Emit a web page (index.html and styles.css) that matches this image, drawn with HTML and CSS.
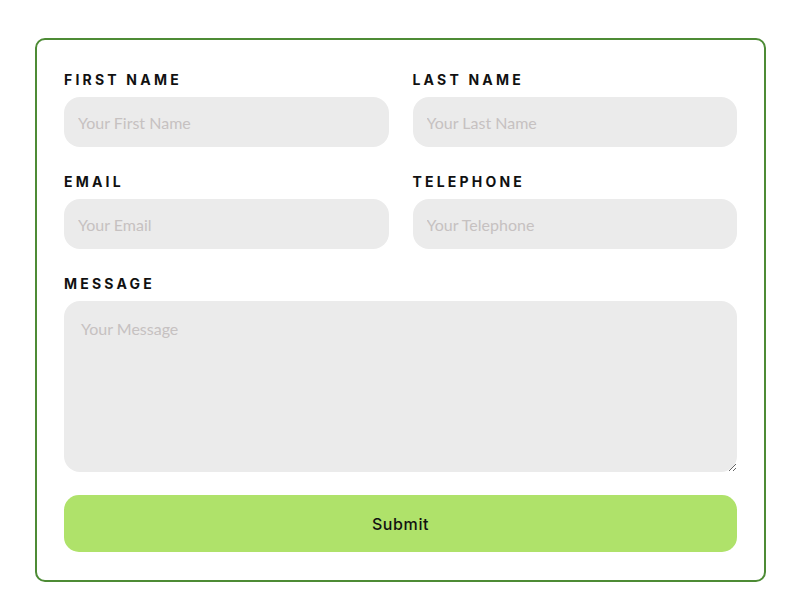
FILE: index.html
```html
<!DOCTYPE html>
<html lang="en">

<head>
    <meta charset="UTF-8">
    <meta name="viewport" content="width=device-width, initial-scale=1.0">
    <title>Contact form</title>
    <link rel="stylesheet" href="styles.css">
</head>

<body>
    <form class="contactForm" action="#" method="POST">
        <div class="field">
            <label for="fname">First Name</label>
            <input type="text" id="fname" name="fname" placeholder="Your First Name">
        </div>
        <div class="field">
            <label for="lname">Last Name</label>
            <input type="text" id="lname" name="lname" placeholder="Your Last Name">
        </div>
        <div class="field">
            <label for="email">Email</label>
            <input type="email" id="email" name="email" placeholder="Your Email">
        </div>
        <div class="field">
            <label for="tel">Telephone</label>
            <input type="tel" id="tel" name="tel" placeholder="Your Telephone">
        </div>
        <div class="field wide">
            <label for="msg">Message</label>
            <textarea id="msg" name="msg" placeholder="Your Message"></textarea>
        </div>
        <button type="submit" class="submitBtn">Submit</button>
    </form>
</body>

</html>
```

FILE: styles.css
```css
body {
    margin: 0;
    background: #fff;
    font-family: "Lato", "Liberation Sans", sans-serif;
}

.contactForm {
    box-sizing: border-box;
    width: 731px;
    height: 544px;
    margin: 38px 0 0 35px;
    padding: 30px 27px 29px 27px;
    border: 2px solid #4d8b35;
    border-radius: 10px;
    display: grid;
    grid-template-columns: 1fr 1fr;
    column-gap: 24px;
    row-gap: 25px;
    align-content: start;
}

.field label {
    display: block;
    font-family: "Inter", sans-serif;
    font-size: 14px;
    font-weight: 700;
    line-height: 20px;
    letter-spacing: 3.2px;
    text-transform: uppercase;
    color: #111;
    margin-bottom: 7px;
}

.field input,
.field textarea {
    box-sizing: border-box;
    display: block;
    width: 100%;
    border: none;
    outline: none;
    background: #ebebeb;
    border-radius: 16px;
    font-family: "Lato", sans-serif;
    font-size: 16px;
    color: #333;
}

.field input {
    height: 50px;
    padding: 0 14px;
}

.field textarea {
    height: 171px;
    margin-top: 1px;
    padding: 18px 17px;
    resize: vertical;
}

::placeholder {
    color: #c6c1c1;
}

.wide {
    grid-column: 1 / 3;
}

.submitBtn {
    grid-column: 1 / 3;
    height: 57px;
    margin-top: -2px;
    border: none;
    border-radius: 15px;
    background: #afe26a;
    font-family: "Inter", sans-serif;
    font-size: 16px;
    font-weight: 500;
    letter-spacing: 0.6px;
    color: #111;
}
```
